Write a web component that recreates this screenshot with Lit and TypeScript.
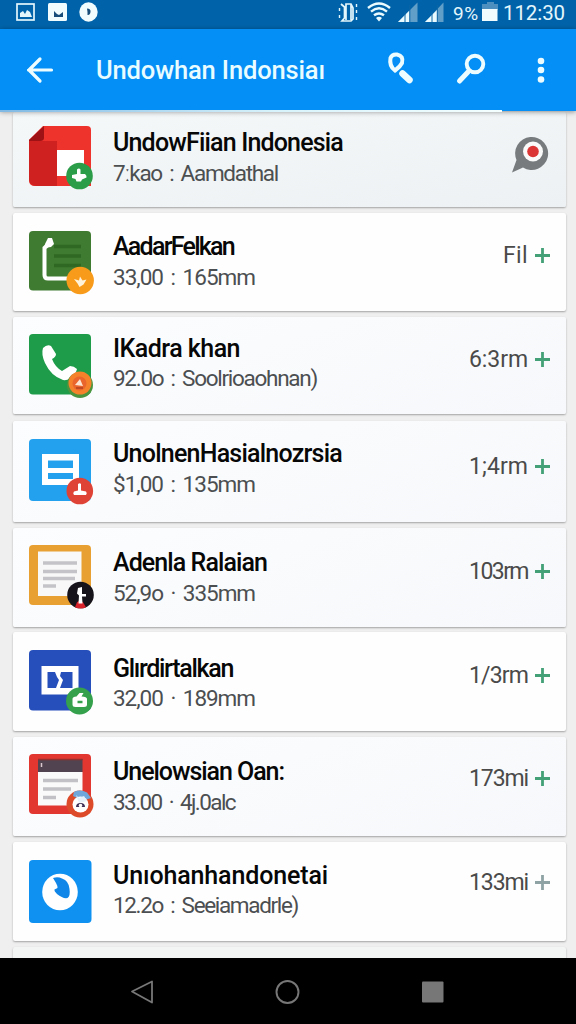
import { LitElement, html, svg, css, TemplateResult } from "lit";
import { customElement } from "lit/decorators.js";

interface Row {
  height: number;
  gap: number;
  iconTop: number;
  iconHeight: number;
  textTop: number;
  lead: number;
  title: string;
  titleWidth: number;
  sub: string;
  subWidth: number;
  metaTop: number;
  meta?: string;
  metaWidth?: number;
  plus?: string;
  tone: string;
  icon: TemplateResult;
}

/* Tile artwork: 64 x 68 box, the tile starts at 0,0 and badges hang over the bottom right. */
const icons = {
  red: svg`
    <path d="M14 0H58Q62 0 62 4V60H6Q0 60 0 54V14Z" fill="#ee332d"/>
    <path d="M0 15H28V60H8Q0 60 0 53Z" fill="#cf211f"/>
    <path d="M0 14L15 0V12Q15 15 11 15H0Z" fill="#9e1114"/>
    <rect x="28" y="24" width="27" height="26" fill="#fff"/>
    <circle cx="50.500" cy="50" r="13.300" fill="#2b9c48"/>
    <path d="M48 43.500q2-2 3.500 0v4.500h4.500q2 1.500 1.500 3.500l-4.500 2-1 2h-4.500l-1-2.500-3.500-1v-3l5-1Z" fill="#fff"/>`,
  green: svg`
    <rect width="62" height="59.500" rx="4" fill="#407b32"/>
    <path d="M25 15.500H52M25 25H52M25 34.500H52" stroke="#2f6822" stroke-width="3.500"/>
    <path d="M21 12L15.500 17V44Q15.500 47.500 19 47.500H42" fill="none" stroke="#fff" stroke-width="4"/>
    <path d="M16 13L19 7h4l2 6-3 3-7 1Z" fill="#fff"/>
    <circle cx="51.200" cy="49.500" r="13.700" fill="#f89b1b"/>
    <path d="M45 48l5 1.500 1-4 2.500 4 4-1-3 5-4 2.500-2-3.500Z" fill="#fff3dc"/>`,
  call: svg`
    <rect width="62" height="60.500" rx="4" fill="#1f9c4a"/>
    <path d="M14 14Q18 10 22 12L27 20Q27 23 23 25Q26 33 33 37L41 32Q45 32 48 35L46 41Q40 47 34 46Q22 42 16 29Q12 20 14 14Z" fill="#fff"/>
    <circle cx="51" cy="51" r="13" fill="#4b943e"/>
    <circle cx="51" cy="49" r="11.500" fill="#f5822b"/>
    <circle cx="50.500" cy="49.500" r="7" fill="#e9652b"/>
    <path d="M46 51L51 45l3 7Z" fill="#fde3d0"/><path d="M47 54h7" stroke="#b2401f" stroke-width="1.500"/>`,
  blue: svg`
    <rect width="62" height="62" rx="4" fill="#23a0ee"/>
    <path d="M13 15H50V46H13ZM19 21.500V29H44V21.500ZM19 34V40H44V34Z" fill="#fff" fill-rule="evenodd"/>
    <circle cx="50.800" cy="52" r="13.300" fill="#df4335"/>
    <path d="M49 45q2-1.500 3 0v6.500l5 1q1.500 1.500 0 3.500H45q-1.500-2 0-3.500l4-1Z" fill="#fff"/>`,
  orange: svg`
    <rect width="62" height="60" rx="4" fill="#e9a033"/>
    <rect x="9" y="6.500" width="43.500" height="44.500" fill="#f8f8f8"/>
    <path d="M14 18H48M14 26.500H48M14 33.500H46M14 41H27" stroke="#c4c4c8" stroke-width="3.300"/>
    <circle cx="51.500" cy="50" r="13.300" fill="#16131a"/>
    <path d="M46 62.200l2-5 3-2 3 2 3 5Q52 65 46 62.200Z" fill="#d8222b"/>
    <path d="M49 43l4-1v7h4v2.500h-4l.5 7h-4l.5-8-2-2Z" fill="#fff"/>`,
  navy: svg`
    <rect width="62" height="60.500" rx="4" fill="#274fbb"/>
    <path d="M12.500 16H49.500V44.500H12.500ZM18.500 22V38H43.500V22Z" fill="#fff" fill-rule="evenodd"/>
    <path d="M26 22H32L31 26L34 30L31 38H27L30 30L28 27Z" fill="#fff"/>
    <circle cx="50.500" cy="51" r="13.500" fill="#35a14c"/>
    <path d="M43.500 49q0-2.500 4-2.500l3-3.500h4l-2 3.500q5.500 0 5.500 2.500v5.500q0 2.500-3 2.500h-8.500q-3 0-3-2.500Z" fill="#fff"/>
    <path d="M48.500 52h5" stroke="#35a14c" stroke-width="2.500"/>`,
  news: svg`
    <rect width="62" height="60" rx="4" fill="#e13730"/>
    <rect x="9" y="5" width="44.500" height="13" fill="#51434f"/>
    <path d="M9 5.500H53.500" stroke="#92302f" stroke-width="1.500"/>
    <path d="M12.500 9v4" stroke="#d9c8cf" stroke-width="1.500"/>
    <rect x="9" y="18" width="44.500" height="33.500" fill="#fafafa"/>
    <path d="M14 26.500H49M14 35H42M14 43.500H27" stroke="#c2c2c6" stroke-width="3.500"/>
    <circle cx="51" cy="50" r="13.500" fill="#dd4a2a"/>
    <path d="M45 38Q51 35 58 38.500L62 44Q56 47 50 45L44 42Z" fill="#6fa7da"/>
    <circle cx="51.500" cy="50.500" r="8" fill="#fff"/>
    <path d="M47 41l3 3 5-2 3 5-8 2Z" fill="#e6f1fb"/>
    <path d="M47 53q0-4 4.500-4t4.500 4Z" fill="#3f3159"/><circle cx="51.500" cy="51.500" r="1.800" fill="#fff"/>`,
  swirl: svg`
    <rect width="62.500" height="63" rx="4" fill="#0f91f2"/>
    <ellipse cx="31" cy="32" rx="17.800" ry="18.300" fill="#fff"/>
    <path d="M24 18Q29 16.500 33 18.500Q40 21 40.500 29Q41.500 36 38.500 38Q34 39 28 34Q25 31 25.500 29.500L28.500 28Q28.500 25.500 27 23Z" fill="#0f86e8"/>`,
};

const GREEN = "#43a077";

const rows: Row[] = [
  { height: 95, gap: 6, iconTop: 14, iconHeight: 60, textTop: 16, lead: 30, title: "UndowFiian Indonesia", titleWidth: 230, sub: "7ːkao : Aamdathal", subWidth: 165, metaTop: 22, tone: "tint", icon: icons.red },
  { height: 98, gap: 6, iconTop: 18, iconHeight: 60, textTop: 19, lead: 30, title: "AadarFelkan", titleWidth: 121, sub: "33,00 : 165mm", subWidth: 142, metaTop: 28, meta: "Fil", metaWidth: 25, plus: GREEN, tone: "", icon: icons.green },
  { height: 97, gap: 7, iconTop: 17, iconHeight: 60, textTop: 17, lead: 29, title: "IKadra khan", titleWidth: 127, sub: "92.0o : Soolrioaohnan)", subWidth: 204, metaTop: 28, meta: "6:3rm", metaWidth: 59, plus: GREEN, tone: "cool", icon: icons.call },
  { height: 101, gap: 6, iconTop: 18, iconHeight: 62, textTop: 18, lead: 30, title: "UnolnenHasialnozrsia", titleWidth: 229, sub: "$1,00 : 135mm", subWidth: 142, metaTop: 31, meta: "1;4rm", metaWidth: 59, plus: GREEN, tone: "cool", icon: icons.blue },
  { height: 99, gap: 5, iconTop: 17, iconHeight: 60, textTop: 20, lead: 30, title: "Adenla Ralaian", titleWidth: 154, sub: "52,9o · 335mm", subWidth: 142, metaTop: 29, meta: "103rm", metaWidth: 59, plus: GREEN, tone: "cool", icon: icons.orange },
  { height: 99, gap: 6, iconTop: 18, iconHeight: 61, textTop: 22, lead: 29, title: "Glırdirtalkan", titleWidth: 120, sub: "32,00 · 189mm", subWidth: 142, metaTop: 29, meta: "1/3rm", metaWidth: 59, plus: GREEN, tone: "", icon: icons.navy },
  { height: 99, gap: 6, iconTop: 17, iconHeight: 60, textTop: 20, lead: 30, title: "Unelowsian Oan:", titleWidth: 171, sub: "33.00 · 4j.0alc", subWidth: 122, metaTop: 27, meta: "173mi", metaWidth: 59, plus: GREEN, tone: "cool", icon: icons.news },
  { height: 99, gap: 6, iconTop: 18, iconHeight: 63, textTop: 19, lead: 29, title: "Unıohanhandonetai", titleWidth: 215, sub: "12.2o : Seeiamadrle)", subWidth: 185, metaTop: 26, meta: "133mi", metaWidth: 59, plus: "#8fa3a5", tone: "", icon: icons.swirl },
];

@customElement("app-root")
export class AppRoot extends LitElement {
  static styles = css`
    :host {
      display: flex;
      flex-direction: column;
      width: 576px;
      height: 1024px;
      overflow: hidden;
      background: #efeff0;
      font-family: Roboto, "Liberation Sans", sans-serif;
    }
    svg { display: block; flex: none; overflow: visible; }
    .fit { display: inline-block; white-space: pre; }
    .status {
      display: flex;
      flex: none;
      align-items: flex-start;
      justify-content: space-between;
      height: 28.500px;
      background: #0063a9;
      color: #e3f6fc;
    }
    .right { display: flex; }
    .pct { width: 30px; font-size: 19px; line-height: 27px; }
    .clock { width: 73px; font-size: 20.500px; line-height: 27px; }
    .bar {
      display: flex;
      flex: none;
      align-items: center;
      height: 82.500px;
      background: #038ff6;
      color: #e9fcff;
      position: relative;
      z-index: 1;
      box-shadow: 0 1px 5px rgba(0, 0, 0, 0.4);
    }
    .progress {
      position: absolute;
      left: 0;
      bottom: -1px;
      width: 502px;
      height: 2px;
      background: linear-gradient(90deg, #7fb9e4 0%, #d8f3fb 55%, #f4ffff 100%);
    }
    .back { margin-left: 26px; }
    .heading { width: 291px; padding-left: 42px; font-size: 25.500px; font-weight: 500; line-height: 34px; }
    .list { flex: 1; min-height: 0; overflow: hidden; padding: 1px 10px 0 13px; }
    .card {
      display: flex;
      align-items: flex-start;
      border-radius: 2px;
      background: #fefefe;
      box-shadow: 0 1px 2px rgba(0, 0, 0, 0.32);
      padding: 0 16px;
      box-sizing: border-box;
    }
    .cool { background: linear-gradient(160deg, #fcfdfe, #f7f8fb); }
    .tint { background: linear-gradient(170deg, #f5f8f9, #edf1f3); }
    .last { height: 30px; background: #f3f4f4; }
    .words { flex: 1; padding-left: 22px; }
    .title { font-size: 25px; font-weight: 500; line-height: 30px; color: #070707; }
    .sub { font-size: 22.500px; line-height: 30px; color: #4c4f51; word-spacing: 3px; }
    .meta { display: flex; align-items: flex-start; font-size: 23px; line-height: 30px; color: #4a4a4a; }
    .plus { margin: 7px 0 0 7px; }
    .nav { flex: none; height: 66.500px; background: #000; }
  `;

  /* Tracks each label so that it fills its data-w column. */
  private fit() {
    this.renderRoot.querySelectorAll<HTMLElement>(".fit").forEach((el) => {
      el.style.letterSpacing = "0";
      const natural = el.getBoundingClientRect().width;
      const n = Array.from(el.textContent ?? "").length;
      const step = (Number(el.dataset.w) - natural) / n;
      el.style.letterSpacing = `${step.toFixed(3)}px`;
    });
  }

  firstUpdated() {
    this.fit();
    document.fonts.ready.then(() => this.fit());
  }

  private label(text: string, width: number) {
    return html`<span class="fit" data-w=${width}>${text}</span>`;
  }

  private row(r: Row) {
    return html`<div class="card ${r.tone}" style="height:${r.height}px;margin-bottom:${r.gap}px">
      <svg width="62" height=${r.iconHeight} style="margin-top:${r.iconTop}px">${r.icon}</svg>
      <div class="words" style="padding-top:${r.textTop}px">
        <div class="title" style="height:${r.lead}px">${this.label(r.title, r.titleWidth)}</div>
        <div class="sub">${this.label(r.sub, r.subWidth)}</div>
      </div>
      <div class="meta" style="padding-top:${r.metaTop}px">
        ${r.meta
          ? html`${this.label(r.meta, r.metaWidth ?? 59)}
              <svg class="plus" width="15" height="15"><path d="M0 7.500H15M7.500 0V15" stroke=${r.plus} stroke-width="2.800"/></svg>`
          : html`<svg width="38" height="42">
              <path d="M0 38.500L4.500 26A16.500 16.500 0 1 1 11 33.500Z" fill="#777b7e"/>
              <circle cx="21" cy="17.500" r="10" fill="#fafafa"/><circle cx="21" cy="17.500" r="5.800" fill="#dc3535"/></svg>`}
      </div>
    </div>`;
  }

  render() {
    return html`
      <div class="status">
        <svg width="110" height="28">
          <rect x="17" y="4" width="17" height="16" fill="none" stroke="#e3f6fc" stroke-width="1.700"/>
          <path d="M20 17V13l3-2 2 3 2-4 3 2 2 5Z" fill="#e3f6fc"/>
          <rect x="48" y="3" width="19" height="18" rx="1.500" fill="#f1fcff"/>
          <path d="M54 17V11l3 3 2 1 4-3v5Z" fill="#174d78"/>
          <ellipse cx="88.500" cy="12" rx="9.200" ry="9.700" fill="#f1fcff"/>
          <path d="M87 8.500q4 0 3.500 3.500t-3 3v-3Z" fill="#174d78"/>
        </svg>
        <div class="right">
          <svg width="115" height="28">
            <g fill="none" stroke="#e3f6fc" stroke-width="1.700">
              <path d="M3 4L6.500 7V18L4 21H13L15 19V8L13 4H8V20M13 4V20"/>
              <path d="M1.500 8V11M1.500 15V18M18.500 4V7M18.500 10V13M18.500 17V20" stroke-width="1.400"/>
            </g>
            <g fill="none" stroke="#e9fbff" stroke-width="2.400">
              <path d="M30 8Q41 -1 52 8M33 11.700Q41 5 49 11.700M36 15.300Q41 11.500 46 15.300"/>
            </g>
            <path d="M38 18Q41 15.500 44 18L41 21.500Z" fill="#e9fbff"/>
            <path d="M60 22L79.500 2.500V22Z" fill="#629fc8"/><path d="M60 22L71.500 10.500V22Z" fill="#e9fbff"/>
            <path d="M87 22L105.500 2.500V22Z" fill="#629fc8"/><path d="M87 22L99 10V22Z" fill="#e9fbff"/>
            <path d="M67 12V22M94 12V22M71.800 5V22M99.300 5V22" stroke="#0d66a6" stroke-width="1"/>
          </svg>
          <div class="pct">${this.label("9%", 26)}</div>
          <svg width="20" height="28">
            <path d="M4 2h7v2h4v6H-1V4h5Z" fill="#4d90bf"/><path d="M-1 9H14.500V21H-1Z" fill="#f1fcff"/>
          </svg>
          <div class="clock">${this.label("112:30", 62)}</div>
        </div>
      </div>
      <div class="bar">
        <svg class="back" width="28" height="28">
          <path d="M2.500 14H25.500M14 3L3 14L14 25" fill="none" stroke="#edfdff" stroke-width="3.200" stroke-linecap="round" stroke-linejoin="round"/>
        </svg>
        <div class="heading">${this.label("Undowhan Indonsiaı", 229)}</div>
        <svg width="189" height="82">
          <g fill="none" stroke="#edfdff" stroke-linecap="round">
            <path d="M3.500 29Q5 25 10 25.500Q17 27 15 34Q13 38 8 41.500Q2 37 3.500 29Z" stroke-width="4"/>
            <path d="M15.500 44.500L22.500 51" stroke-width="6.500"/>
            <circle cx="88" cy="35" r="8.300" stroke-width="3.900"/>
            <path d="M81 43L72.500 52" stroke-width="5"/>
          </g>
          <g fill="#edfdff"><circle cx="154" cy="32" r="3.300"/><circle cx="154" cy="41" r="3.300"/><circle cx="154" cy="50.500" r="3.300"/></g>
        </svg>
        <div class="progress"></div>
      </div>
      <div class="list">
        ${rows.map((r) => this.row(r))}
        <div class="card last"></div>
      </div>
      <div class="nav">
        <svg width="576" height="66">
          <path d="M132 33.500L152 23.500V44.500Z" fill="none" stroke="#777" stroke-width="1.800" stroke-linejoin="round"/>
          <circle cx="287.500" cy="34" r="11" fill="none" stroke="#777" stroke-width="1.900"/>
          <rect x="422" y="23.500" width="21.500" height="21" rx="1" fill="#777"/>
        </svg>
      </div>
    `;
  }
}
